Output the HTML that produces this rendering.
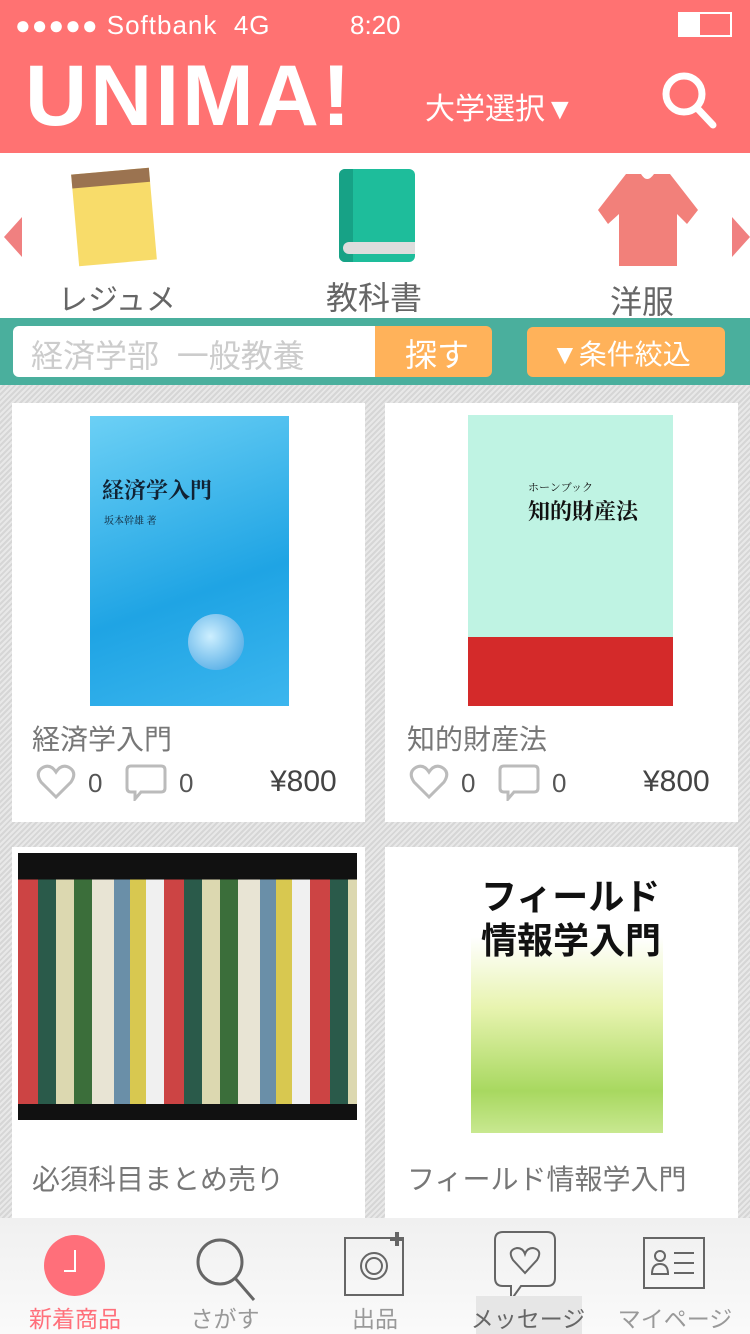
<!DOCTYPE html><html><head><meta charset="utf-8"><style>
*{margin:0;padding:0;box-sizing:border-box}
body{width:750px;height:1334px;overflow:hidden;font-family:"Liberation Sans","Noto Sans CJK JP",sans-serif;background:#e4e4e4;position:relative}
.abs{position:absolute}
.top{left:0;top:0;width:750px;height:153px;background:#FF7272;color:#fff}
.cat{left:0;top:153px;width:750px;height:165px;background:#fff}
.bar{left:0;top:318px;width:750px;height:67px;background:#4AAF9D}
.grid{left:0;top:385px;width:750px;height:833px;background:repeating-linear-gradient(135deg,#e8e8e8 0 2px,#d6d6d6 2px 4px)}
.card{background:#fff;width:353px}
.t{color:#777;font-size:28px}
.cnt{color:#555;font-size:26px;line-height:40px}
.price{color:#444;font-size:30px}
.tab{top:1218px;left:0;width:750px;height:116px;background:linear-gradient(#f0f0f0,#fafafa)}
.tl{font-size:23px;color:#999;top:1300px;text-align:center;width:150px}
</style></head><body>
<div class="abs top">
 <div class="abs" style="left:15px;top:10px;font-size:26px;letter-spacing:1px">●●●●● Softbank&nbsp;&nbsp;4G</div>
 <div class="abs" style="left:350px;top:10px;font-size:26px">8:20</div>
 <div class="abs" style="left:678px;top:12px;width:54px;height:25px;border:2px solid #fff"><div style="width:20px;height:100%;background:#fff"></div></div>
 <div class="abs" style="left:25px;top:53px;font-size:86px;font-weight:bold;letter-spacing:3px;line-height:86px">UNIMA!</div>
 <div class="abs" style="left:425px;top:84px;font-size:30px">大学選択▼</div>
 <svg class="abs" style="left:660px;top:70px" width="60" height="62"><circle cx="24" cy="24" r="18" fill="none" stroke="#fff" stroke-width="7"/><line x1="37" y1="38" x2="53" y2="55" stroke="#fff" stroke-width="7" stroke-linecap="round"/></svg>
</div>
<div class="abs cat">
 <div class="abs" style="left:4px;top:64px;width:0;height:0;border-top:20px solid transparent;border-bottom:20px solid transparent;border-right:18px solid #f08080"></div>
 <div class="abs" style="left:732px;top:64px;width:0;height:0;border-top:20px solid transparent;border-bottom:20px solid transparent;border-left:18px solid #f08080"></div>
 <div class="abs" style="left:75px;top:18px;width:78px;height:92px;background:#F8DC6A;transform:rotate(-5deg)"><div style="height:14px;background:#9b7350"></div></div>
 <div class="abs" style="left:339px;top:16px;width:76px;height:93px;background:#1EBD9B;border-radius:6px;overflow:hidden"><div style="position:absolute;left:0;top:0;width:14px;height:100%;background:#17a286"></div><div style="position:absolute;left:4px;top:73px;width:72px;height:12px;background:#ddd;border-radius:6px 0 0 6px"></div></div>
 <svg class="abs" style="left:596px;top:19px" width="104" height="96"><path d="M30 2 L45 2 Q51 12 58 2 L74 2 L102 38 L91 52 L81 42 L81 94 L23 94 L23 42 L12 52 L2 38 Z" fill="#F2807A"/></svg>
 <div class="abs" style="left:58px;top:122px;font-size:30px;color:#666">レジュメ</div>
 <div class="abs" style="left:326px;top:120px;font-size:32px;color:#666">教科書</div>
 <div class="abs" style="left:610px;top:124px;font-size:32px;color:#666">洋服</div>
</div>
<div class="abs bar">
 <div class="abs" style="left:13px;top:8px;width:364px;height:51px;background:#fff;border-radius:6px 0 0 6px;font-size:32px;color:#ccc;padding:5px 0 0 18px;white-space:nowrap">経済学部&nbsp;&nbsp;一般教養</div>
 <div class="abs" style="left:375px;top:8px;width:117px;height:51px;background:#FFB25A;border-radius:0 6px 6px 0;color:#fff;font-size:32px;padding:4px 0 0 30px">探す</div>
 <div class="abs" style="left:527px;top:9px;width:198px;height:50px;background:#FFB25A;border-radius:6px;color:#fff;font-size:28px;padding:6px 0 0 24px">▼条件絞込</div>
</div>
<div class="abs grid"></div>
<div class="abs card" style="left:12px;top:403px;height:419px">
 <div class="abs" style="left:78px;top:13px;width:199px;height:290px;background:linear-gradient(160deg,#6cd0f5,#1fa4e4 60%,#3cb6ee);color:#123;font-family:'Noto Serif CJK SC',serif">
  <div class="abs" style="left:12px;top:58px;font-size:22px;font-weight:bold">経済学入門</div>
  <div class="abs" style="left:14px;top:96px;font-size:10px">坂本幹雄 著</div>
  <div class="abs" style="left:98px;top:198px;width:56px;height:56px;border-radius:50%;background:radial-gradient(circle at 40% 40%,#cdefff,#3a9ee0)"></div></div>
 <div class="abs t" style="left:20px;top:315px">経済学入門</div>
 <svg class="abs" style="left:24px;top:360px" width="40" height="38"><path d="M20 34 L5 19 Q-1 10 6 5 Q14 0 20 9 Q26 0 34 5 Q41 10 35 19 Z" fill="none" stroke="#bbb" stroke-width="3"/></svg>
 <div class="abs cnt" style="left:76px;top:360px">0</div>
 <svg class="abs" style="left:113px;top:360px" width="42" height="38"><path d="M6 3h30q4 0 4 4v18q0 4-4 4H16l-6 7v-7H6q-4 0-4-4V7q0-4 4-4z" fill="none" stroke="#bbb" stroke-width="3"/></svg>
 <div class="abs cnt" style="left:167px;top:360px">0</div>
 <div class="abs price" style="left:258px;top:362px">¥800</div>
</div>
<div class="abs card" style="left:385px;top:403px;height:419px">
 <div class="abs" style="left:83px;top:12px;width:205px;height:291px;background:#bff3e3;font-family:'Noto Serif CJK SC',serif;color:#111">
  <div class="abs" style="left:60px;top:64px;font-size:11px">ホーンブック</div>
  <div class="abs" style="left:60px;top:80px;font-size:22px;font-weight:bold">知的財産法</div>
  <div class="abs" style="left:0;top:222px;width:100%;height:69px;background:#d42a2a"></div></div>
 <div class="abs t" style="left:22px;top:315px">知的財産法</div>
 <svg class="abs" style="left:24px;top:360px" width="40" height="38"><path d="M20 34 L5 19 Q-1 10 6 5 Q14 0 20 9 Q26 0 34 5 Q41 10 35 19 Z" fill="none" stroke="#bbb" stroke-width="3"/></svg>
 <div class="abs cnt" style="left:76px;top:360px">0</div>
 <svg class="abs" style="left:113px;top:360px" width="42" height="38"><path d="M6 3h30q4 0 4 4v18q0 4-4 4H16l-6 7v-7H6q-4 0-4-4V7q0-4 4-4z" fill="none" stroke="#bbb" stroke-width="3"/></svg>
 <div class="abs cnt" style="left:167px;top:360px">0</div>
 <div class="abs price" style="left:258px;top:362px">¥800</div>
</div>
<div class="abs card" style="left:12px;top:847px;height:380px">
 <div class="abs" style="left:6px;top:6px;width:339px;height:267px;background:linear-gradient(#111 0 10%,transparent 10% 94%,#111 94%),repeating-linear-gradient(90deg,#c44 0 20px,#2a5a4a 20px 38px,#dcd8b0 38px 56px,#3b6e3a 56px 74px,#e8e4d4 74px 96px,#6a8fa8 96px 112px,#d8c850 112px 128px,#f0f0f0 128px 146px)"></div>
 <div class="abs t" style="left:20px;top:311px">必須科目まとめ売り</div>
</div>
<div class="abs card" style="left:385px;top:847px;height:380px">
 <div class="abs" style="left:86px;top:6px;width:192px;height:280px;background:linear-gradient(#fff 0 30%,#e8f4b0 55%,#a8d860 85%,#c8e890)">
  <div class="abs" style="left:10px;top:22px;font-size:36px;font-weight:bold;color:#111;line-height:44px">フィールド<br>情報学入門</div></div>
 <div class="abs t" style="left:22px;top:311px">フィールド情報学入門</div>
</div>
<div class="abs tab">
 <div class="abs" style="left:44px;top:17px;width:61px;height:61px;border-radius:50%;background:#FF6F7A"><div style="position:absolute;left:30px;top:15px;width:2px;height:22px;background:#fff"></div><div style="position:absolute;left:20px;top:35px;width:12px;height:2px;background:#fff"></div></div>
 <svg class="abs" style="left:192px;top:14px" width="66" height="72"><circle cx="28" cy="30" r="22" fill="none" stroke="#666" stroke-width="3"/><line x1="43" y1="46" x2="62" y2="68" stroke="#666" stroke-width="3"/></svg>
 <svg class="abs" style="left:343px;top:12px" width="64" height="68"><rect x="2" y="8" width="58" height="57" fill="none" stroke="#666" stroke-width="2"/><circle cx="31" cy="36" r="13" fill="none" stroke="#666" stroke-width="2"/><circle cx="31" cy="36" r="8" fill="none" stroke="#666" stroke-width="2"/><path d="M54 2v14M47 9h14" stroke="#666" stroke-width="4"/></svg>
 <svg class="abs" style="left:493px;top:12px" width="64" height="72"><path d="M10 2h44q8 0 8 8v38q0 8-8 8H28l-10 14v-14h-8q-8 0-8-8V10q0-8 8-8z" fill="none" stroke="#666" stroke-width="2"/><path d="M32 43 L20 30 Q14 20 24 18 Q30 18 32 24 Q34 18 40 18 Q50 20 44 30 Z" fill="none" stroke="#666" stroke-width="2"/></svg>
 <svg class="abs" style="left:642px;top:18px" width="64" height="56"><rect x="2" y="2" width="60" height="50" fill="none" stroke="#666" stroke-width="2"/><circle cx="18" cy="20" r="5" fill="none" stroke="#666" stroke-width="2"/><path d="M10 38q0-10 8-10t8 10z" fill="none" stroke="#666" stroke-width="2"/><path d="M32 17h20M32 27h20M32 37h20" stroke="#666" stroke-width="2"/></svg>
 <div class="abs" style="left:476px;top:78px;width:106px;height:38px;background:#e6e6e6"></div>
</div>
<div class="abs tl" style="left:0;top:1300px;color:#FF6F7A">新着商品</div>
<div class="abs tl" style="left:150px">さがす</div>
<div class="abs tl" style="left:300px">出品</div>
<div class="abs tl" style="left:453px;color:#666">メッセージ</div>
<div class="abs tl" style="left:600px">マイページ</div>
</body></html>
